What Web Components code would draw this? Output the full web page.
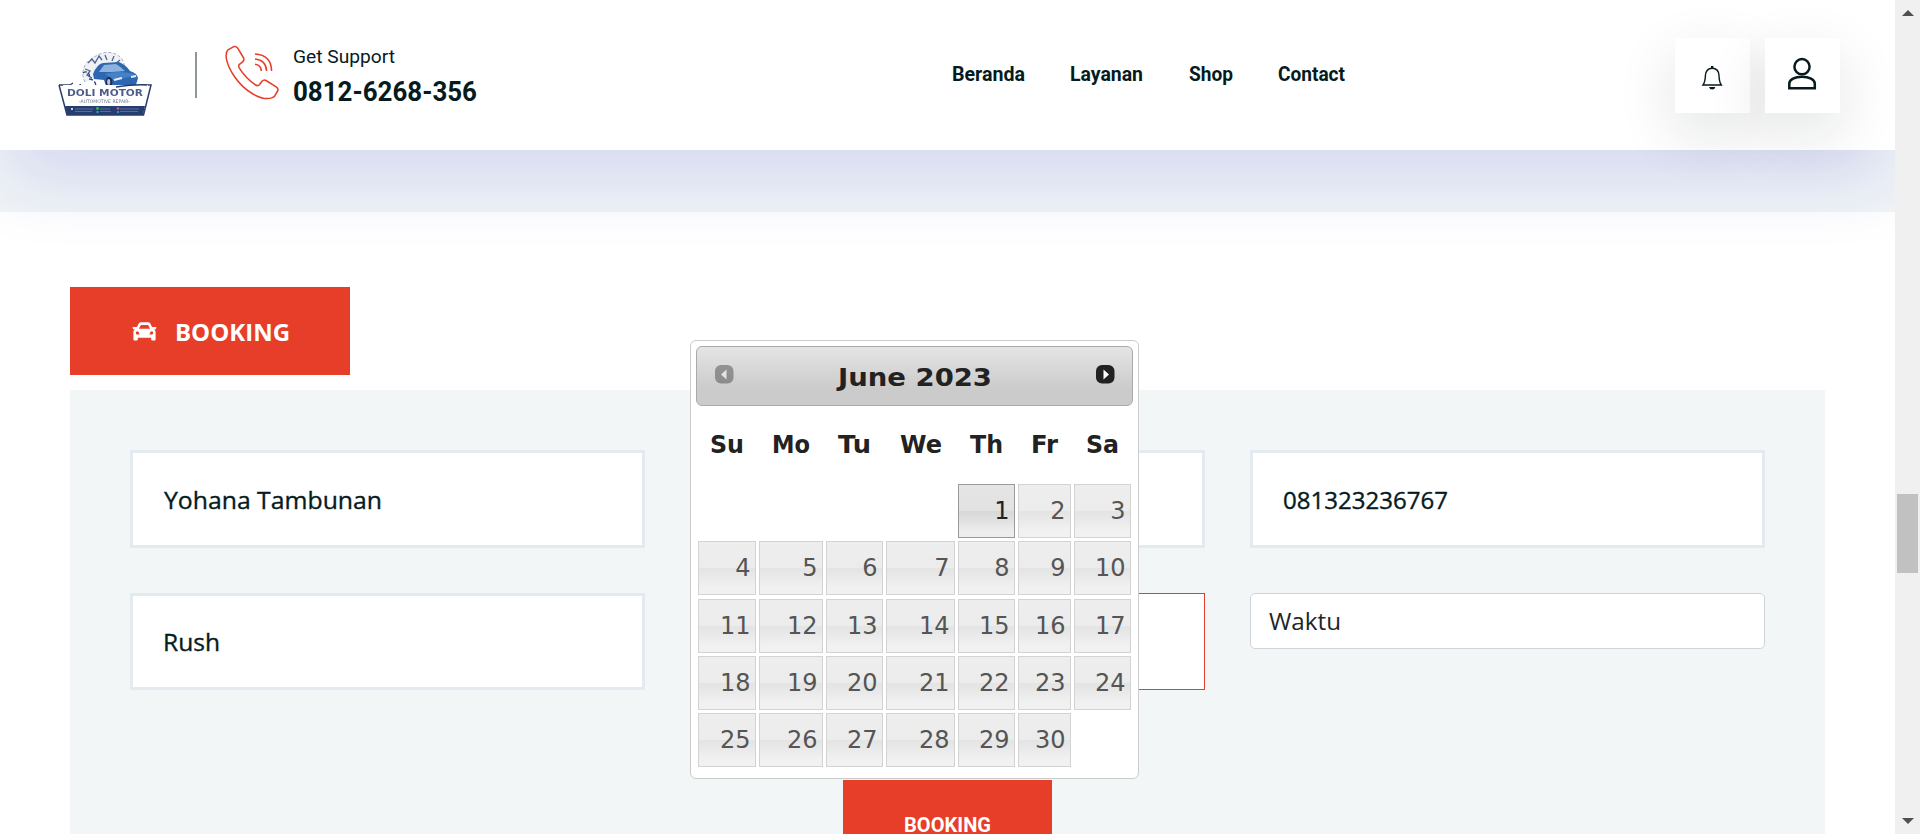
<!DOCTYPE html>
<html lang="id">
<head>
<meta charset="utf-8">
<title>Doli Motor - Booking</title>
<style>
html,body{margin:0;height:834px;overflow:hidden;background:#fff}
body{font-family:"Open Sans","Noto Sans",sans-serif;color:#061b1e}
</style>
</head>
<body>
<doli-app></doli-app>
<script>
const define = (name, html, after) => customElements.define(name, class extends HTMLElement {
  constructor() {
    super();
    this.attachShadow({ mode: 'open' });
  }
  connectedCallback() {
    this.shadowRoot.innerHTML = typeof html === 'function' ? html(this) : html;
    if (after) after(this);
  }
});

// A line of text condensed to a fixed width; the baseline sits at the bottom of its box.
define('fit-text', el => {
  const w = el.getAttribute('w'), size = el.getAttribute('size');
  const h = Math.round(size * .75);
  return `<style>
    :host{display:block;width:${w}px;height:${h}px;flex:none}
    svg{display:block;overflow:visible}
    text{font:${el.getAttribute('weight') || 400} ${size}px ${el.getAttribute('face') || 'Roboto'},sans-serif;fill:currentColor;stroke:currentColor;stroke-width:${el.getAttribute('bold') || 0}}
  </style><svg width="${w}" height="${h}"><text x="0" y="${h}" textLength="${w}" lengthAdjust="spacingAndGlyphs">${el.textContent}</text></svg>`;
});

define('brand-logo', `<style>:host{display:block;width:96px;height:66px}svg{display:block;filter:blur(.5px)}text{font-family:"DejaVu Sans",sans-serif}</style>
<svg width="96" height="66" viewBox="0 0 96 66">
  <path d="M27 31C21 20 28 9 38 5C45 0 56 0 62 6C67 10 67 17 66 21" fill="#eef2f7" stroke="#a3afc5" stroke-width="1" stroke-dasharray="3 2"/>
  <path d="M30 12l4-4 3 4 4-7 3 4M27 18l5 2-3 4 5 3M47 4l2 5M56 5l-2 5M62 9l-5 4" stroke="#54658b" stroke-width="1.3" fill="none"/>
  <path d="M25 22c4-3 8 1 6 6 4 0 7 3 7 8M20 36c2-4 5-2 4 1M12 34l3-2" stroke="#2c4477" stroke-width="1.3" fill="none" stroke-dasharray="4 2"/>
  <path d="M35 23Q39 13 45 12L61 11Q68 14 72 20Q79 22 80 27L78 34L55 36L48 35L46 29L36 28Z" fill="#2e67b1"/>
  <path d="M41 21L46 14L58 13Q63 16 67 20L54 21Z" fill="#8db2dc"/>
  <path d="M47 23Q59 19 77 23L71 26L56 29Z" fill="#4481c9"/>
  <path d="M56 29l8-2M73 26l5-1" stroke="#e5f0fb" stroke-width="2"/>
  <ellipse cx="51" cy="31" rx="3.4" ry="5" fill="#172d5b"/><ellipse cx="50.7" cy="31" rx="1.6" ry="3" fill="#b7c4d9"/>
  <path d="M1 34H12M84 34H93L85.5 64H9L1 34" fill="#fff" stroke="#2b3c69" stroke-width="1.5"/>
  <path d="M5 34H90L83 55H10Z" fill="#fff"/>
  <path d="M7 55H87L85 64H9Z" fill="#263d70"/>
  <path d="M58 36Q78 33 89 34" fill="none" stroke="#263d70" stroke-width="1.5"/>
  <text x="9" y="45" font-size="8.8" font-weight="700" fill="#4c5d8a" textLength="76" lengthAdjust="spacingAndGlyphs">DOLI MOTOR</text>
  <text x="21" y="52" font-size="4.8" fill="#6a7689" textLength="51" lengthAdjust="spacingAndGlyphs">-AUTOMOTIVE REPAIR-</text>
  <path d="M17 58h18M17 60.5h17M42 58h10M42 60.5h11M62 58h19M62 60.5h18" stroke="#667aa3" stroke-width=".8"/>
  <circle cx="14" cy="58" r="1" fill="#fff"/><circle cx="39.5" cy="57.5" r="1.4" fill="#35c443"/><circle cx="39.5" cy="61" r="1.1" fill="#4ba6e8"/><circle cx="60" cy="57.5" r="1.3" fill="#df5772"/><circle cx="60" cy="61" r="1.1" fill="#36a4e4"/>
</svg>`);

define('support-line', `<style>
:host{display:flex;align-items:flex-start;height:100px}
i{width:2px;height:46px;background:#8e9697;margin:52px 28px 0 0}
svg{display:block;margin-top:45px}
div{padding:49px 0 0 14px;display:grid;gap:18px;justify-items:start}
</style><i></i>
<svg width="54" height="56" viewBox="0 0 54 56" fill="none" stroke="#e73e29" stroke-width="1.55" stroke-linejoin="round" stroke-linecap="round">
 <path d="M3 4.8L8.3 1.8Q11 .8 12.7 3.2L18.6 13Q19.6 15.2 17.6 16.8L14.4 19.3Q13.2 20.6 14.2 22.8Q20.5 33 30.2 39.6Q32.5 41.4 34.2 40L37 36.3Q38.8 34.2 41 35.5L51.2 41.8Q53.8 43.6 52.6 46L49.8 50.8Q49.2 52 47.4 52.6C36 57 18.5 44.8 9.6 31.7C.8 18.9-.6 8.5 3 4.8Z"/>
 <path d="M30 19.3Q36 19.8 36.3 26M30 14Q41 15 41.6 26M30 9Q46.3 10 46.6 26" stroke-linecap="butt"/>
</svg>
<div><fit-text w="102" size="19">Get Support</fit-text><fit-text w="184" size="27" weight="700">0812-6268-356</fit-text></div>`);

define('main-nav', `<style>:host{display:flex;gap:45.4px}</style>
<fit-text w="73" size="19.5" weight="700">Beranda</fit-text>
<fit-text w="73" size="19.5" weight="700">Layanan</fit-text>
<fit-text w="44" size="19.5" weight="700">Shop</fit-text>
<fit-text w="67" size="19.5" weight="700">Contact</fit-text>`);

define('icon-tile', `<style>:host{display:block;width:75px;height:75px;background:#fff;box-shadow:0 20px 60px rgba(5,28,24,.12)}</style><slot></slot>`);

define('header-tools', `<style>:host{display:flex;gap:15px}svg{display:block}</style>
<icon-tile><svg width="75" height="75" fill="none" stroke="#061b1e" stroke-width="1.4">
 <path d="M28 47Q30.2 44 30.4 37.5Q31 30.2 37.2 30.2Q43.6 30.2 44 37.5Q44.2 44 46.3 47Z"/><path d="M37.2 28v2" stroke-width="2.4"/><path d="M34 49h6.4q-.6 2.6-3.2 2.6T34 49Z" fill="#061b1e" stroke="none"/></svg></icon-tile>
<icon-tile><svg width="75" height="75" fill="none" stroke="#061b1e" stroke-width="2.5">
 <circle cx="37" cy="28.7" r="7.6"/><path d="M24.3 50.2V45.5C24.3 41.5 30 38.7 37 38.7S49.8 41.5 49.8 45.5V50.2Z"/></svg></icon-tile>`);

define('site-header', `<style>
:host{display:flex;height:150px;background:#fff;position:relative;z-index:2;box-shadow:0 36px 70px -5px rgba(33,34,205,.13)}
brand-logo{margin:51px 41px 0 58px}
main-nav{margin:66px 0 0 475px}
header-tools{margin:38px 55px 0 auto}
</style><brand-logo></brand-logo><support-line></support-line><main-nav></main-nav><header-tools></header-tools>`);

define('booking-tab', `<style>
:host{display:flex;align-items:center;width:280px;height:88px;box-sizing:border-box;background:#e63e29;color:#fff;padding-left:62px}
svg{display:block;margin-right:18px}
fit-text{margin-top:2px}
</style><svg width="25" height="19" viewBox="0 0 25 19"><path fill="#fff" fill-rule="evenodd" d="M5 5L6.7 1.6Q7.4 .2 9 .2H16Q17.6 .2 18.3 1.6L20 5H23.7Q24.5 5.1 24.4 5.8L24 6.7Q23.8 7.3 23.2 7.3H22.2Q23.6 8.4 23.6 10V17.5Q23.6 18.6 22.5 18.6H20.3Q19.2 18.6 19.2 17.5V15.7H5.8V17.5Q5.8 18.6 4.7 18.6H2.5Q1.4 18.6 1.4 17.5V10Q1.4 8.4 2.8 7.3H1.8Q1.2 7.3 1 6.7L.6 5.8Q.5 5.1 1.3 5ZM7 6.8H18L16.5 3.5Q16.2 3 15.6 3H9.4Q8.8 3 8.5 3.5ZM5.3 9.3A1.5 1.5 0 1 0 5.4 12.4H7.5Q7.3 9.8 5.3 9.3ZM19.7 9.3Q17.7 9.8 17.5 12.4H19.6A1.5 1.5 0 1 0 19.7 9.3Z"/></svg>
<fit-text w="115" size="24" weight="700" face="'Open Sans'">BOOKING</fit-text>`);

define('form-field', `<style>
:host{display:block;box-sizing:border-box;height:98px;background:#fff;border:3px solid #e4ebf0;padding:0 30px}
:host([short]){height:97px}
:host([focused]){height:97px;border:1px solid #e0412c}
:host([select]){height:56px;border:1px solid #ced4da;border-radius:5px;padding:0 18px;color:#212529}
</style><slot></slot>`);

define('booking-form', `<style>
:host{display:grid;grid-template-columns:repeat(3,515px);grid-template-rows:98px 97px 60px;gap:45px;box-sizing:border-box;height:444px;background:#f2f6f7;padding:60px 60px 0;overflow:hidden;align-items:start}
.b{grid-column:1/4;justify-self:start;margin:45px 0 0 713px;width:209px;height:100px;background:#e63e29;color:#fff;box-sizing:border-box;padding:36px 0 0 61px}
</style>
<form-field><fit-text style="margin:38px 0 0 .5px" w="218" size="24" weight="500" bold=".35" face="'Open Sans'">Yohana Tambunan</fit-text></form-field>
<form-field></form-field>
<form-field><fit-text style="margin-top:38px" w="165" size="24" weight="500" bold=".35" face="'Open Sans'">081323236767</fit-text></form-field>
<form-field short><fit-text style="margin-top:37px" w="57" size="24" weight="500" bold=".35" face="'Open Sans'">Rush</fit-text></form-field>
<form-field focused></form-field>
<form-field select><fit-text style="margin-top:18px" w="72" size="24" face="'Open Sans'">Waktu</fit-text></form-field>
<div class="b"><fit-text w="87" size="20.7" weight="700">BOOKING</fit-text></div>`);

define('date-picker', `<style>
:host{display:block;box-sizing:border-box;width:449px;height:439px;background:#fff;border:1px solid #ccc;border-radius:6px;padding:5px;font:24px "DejaVu Sans",sans-serif;color:#222}
header{display:flex;box-sizing:border-box;height:60px;border:1px solid #aaa;border-radius:6px;background:linear-gradient(#e5e5e5,#cbcbcb 72%,#cbcbcb);padding:18px 17px 0 18px;justify-content:space-between}
header fit-text{margin:3px 0 0 -1px}
svg{display:block}
.g{display:grid;grid-template-columns:58px 64px 57px 69px 57px 53px 57px;column-gap:3px;padding-left:2px}
.w{height:78px;justify-items:center;padding-top:29px;box-sizing:border-box}
.d{grid-template-rows:repeat(5,54px);row-gap:3.25px}
.d span{box-sizing:border-box;border:1px solid #d3d3d3;background:linear-gradient(#eee 0,#ececec 49%,#e4e4e4 51%,#e6e6e6 58%,#f1f1f1 88%);color:#555;text-align:right;padding-right:4.5px;line-height:52px}
.d span:first-child{grid-column:5;border-color:#999;color:#212121;background:linear-gradient(#e5e5e5 0,#e2e2e2 49%,#d8d8d8 51%,#dcdcdc 60%,#ededed 88%)}
</style>
<header><svg width="19" height="20" opacity=".38"><rect x="0" y="0" width="18.5" height="18.5" rx="6" fill="#222"/><path d="M11.5 4.5v10L6 9.5z" fill="#fff"/></svg>
<fit-text w="154" size="24.5" weight="700" face="'DejaVu Sans'">June 2023</fit-text>
<svg width="19" height="20"><rect x="0" y="0" width="18.5" height="18.5" rx="6" fill="#222"/><path d="M7.5 4.5v10L13 9.5z" fill="#fff"/></svg></header>
<div class="g w"></div><div class="g d"></div>`, el => {
  const widths = [34, 38, 33, 42, 33, 27, 33];
  el.shadowRoot.querySelector('.w').innerHTML = ['Su','Mo','Tu','We','Th','Fr','Sa']
    .map((d, i) => `<fit-text w="${widths[i]}" size="24" weight="700" face="'DejaVu Sans'">${d}</fit-text>`).join('');
  el.shadowRoot.querySelector('.d').innerHTML =
    Array.from({ length: 30 }, (_, i) => `<span>${i + 1}</span>`).join('');
});

define('page-scrollbar', `<style>
:host{display:flex;flex-direction:column;align-items:center;box-sizing:border-box;width:25px;height:834px;background:#f0f0f0;padding:10px 0}
i{width:21px;height:79px;background:#c1c1c1;margin:478px 0 auto}svg{display:block}
</style><svg width="12" height="6"><path d="M0 6L6 0 12 6Z" fill="#505050"/></svg><i></i><svg width="12" height="6"><path d="M0 0H12L6 6Z" fill="#505050"/></svg>`);

define('doli-app', `<style>
:host{display:flex;width:1920px;height:834px;overflow:hidden}
main{width:1895px;height:834px;overflow:hidden;position:relative}
.band{height:62px;background:#f1f5f6}
booking-tab{margin:75px 0 15px 70px}
booking-form{margin:0 70px}
date-picker{position:absolute;left:690px;top:340px;z-index:3}
</style><main><site-header></site-header><div class="band"></div><booking-tab></booking-tab><booking-form></booking-form><date-picker></date-picker></main><page-scrollbar></page-scrollbar>`);
</script>
</body>
</html>
